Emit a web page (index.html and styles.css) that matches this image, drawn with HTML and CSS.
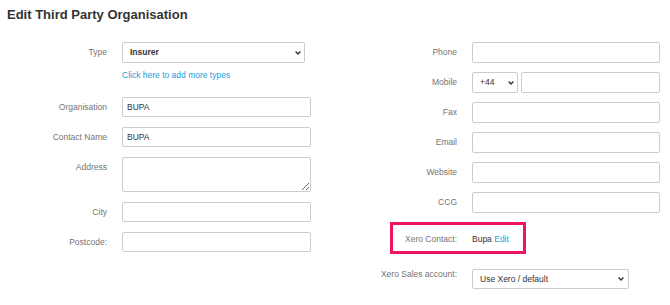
FILE: index.html
```html
<!DOCTYPE html>
<html lang="en">
<head>
<meta charset="utf-8">
<title>Edit Third Party Organisation</title>
<link rel="stylesheet" href="styles.css">
</head>
<body>
<div class="page">
  <h1 class="title">Edit Third Party Organisation</h1>
  <div class="columns">
    <div class="col col-left">
      <div class="row">
        <label class="lbl">Type</label>
        <div class="ctrl">
          <div class="select select-type">
            <span class="select-text bold">Insurer</span>
            <svg class="chev" width="6" height="4" viewBox="0 0 6 4"><path d="M0.6 0.6 L3 3 L5.4 0.6" fill="none" stroke="#333" stroke-width="1.4"/></svg>
          </div>
          <a class="link add-types" href="#">Click here to add more types</a>
        </div>
      </div>
      <div class="row">
        <label class="lbl">Organisation</label>
        <div class="input">BUPA</div>
      </div>
      <div class="row">
        <label class="lbl">Contact Name</label>
        <div class="input">BUPA</div>
      </div>
      <div class="row">
        <label class="lbl">Address</label>
        <textarea class="textarea"></textarea>
      </div>
      <div class="row">
        <label class="lbl">City</label>
        <div class="input"></div>
      </div>
      <div class="row">
        <label class="lbl">Postcode:</label>
        <div class="input"></div>
      </div>
    </div>

    <div class="col col-right">
      <div class="row">
        <label class="lbl">Phone</label>
        <div class="input"></div>
      </div>
      <div class="row">
        <label class="lbl">Mobile</label>
        <div class="mobile">
          <div class="select select-code">
            <span class="select-text">+44</span>
            <svg class="chev" width="6" height="4" viewBox="0 0 6 4"><path d="M0.6 0.6 L3 3 L5.4 0.6" fill="none" stroke="#333" stroke-width="1.4"/></svg>
          </div>
          <div class="input"></div>
        </div>
      </div>
      <div class="row">
        <label class="lbl">Fax</label>
        <div class="input"></div>
      </div>
      <div class="row">
        <label class="lbl">Email</label>
        <div class="input"></div>
      </div>
      <div class="row">
        <label class="lbl">Website</label>
        <div class="input"></div>
      </div>
      <div class="row">
        <label class="lbl">CCG</label>
        <div class="input"></div>
      </div>
      <div class="highlight">
        <span class="hl-label">Xero Contact:</span>
        <span class="hl-value">Bupa <a class="link" href="#">Edit</a></span>
      </div>
      <div class="row row-sales">
        <label class="lbl lbl-top">Xero Sales account:</label>
        <div class="select select-sales">
          <span class="select-text">Use Xero / default</span>
          <svg class="chev" width="6" height="4" viewBox="0 0 6 4"><path d="M0.6 0.6 L3 3 L5.4 0.6" fill="none" stroke="#333" stroke-width="1.4"/></svg>
        </div>
      </div>
    </div>
  </div>
</div>
</body>
</html>
```

FILE: styles.css
```css
* { box-sizing: border-box; }

html, body {
  margin: 0;
  padding: 0;
  background: #ffffff;
}

body {
  font-family: "Liberation Sans", Arial, sans-serif;
  font-size: 8.5px;
  color: #333333;
}

.page {
  width: 670px;
  height: 305px;
  overflow: hidden;
}

.title {
  margin: 0;
  padding: 7px 0 0 7px;
  font-size: 13px;
  line-height: 15px;
  font-weight: bold;
  color: #333333;
}

.columns {
  margin-top: 20px;
  display: grid;
  grid-template-columns: 335px 335px;
}

.col {
  display: flex;
  flex-direction: column;
}

.col-left { gap: 10px; }
.col-right { gap: 9px; }

.row {
  display: grid;
  column-gap: 15px;
  align-items: start;
}

.col-left .row { grid-template-columns: 107px 189px; }
.col-right .row { grid-template-columns: 122px 188px; }

.lbl {
  text-align: right;
  line-height: 20px;
  color: #757575;
  white-space: nowrap;
}

.lbl-top { line-height: 10px; }

.input {
  height: 20px;
  border: 1px solid #cccccc;
  border-radius: 2px;
  background: #fff;
  padding: 0 4px;
  line-height: 18px;
  color: #333;
}

.col-right .input { height: 21px; line-height: 19px; }

.textarea {
  display: block;
  width: 189px;
  height: 35px;
  margin: 0;
  border: 1px solid #cccccc;
  border-radius: 2px;
  resize: vertical;
  font: inherit;
}

.ctrl {
  display: flex;
  flex-direction: column;
}

.select {
  position: relative;
  height: 21px;
  border: 1px solid #cccccc;
  border-radius: 2px;
  background: #fff;
  padding: 0 7px;
  line-height: 19px;
  color: #333;
}

.select .chev {
  position: absolute;
  right: 3px;
  top: 8px;
}

.bold { font-weight: bold; }

.select-type { width: 183px; }

.link {
  color: #1e9de0;
  text-decoration: none;
}

.add-types {
  margin-top: 7px;
  margin-bottom: 6px;
  line-height: 11px;
  height: 11px;
}

.mobile {
  display: flex;
  gap: 3px;
}

.select-code {
  width: 46px;
  flex: none;
}

.mobile .input { flex: 1; }

.highlight {
  margin-left: 55px;
  width: 136px;
  height: 32px;
  border: 3px solid #ef1463;
  display: flex;
  align-items: center;
  gap: 15px;
  padding-top: 1px;
}

.hl-label {
  width: 64px;
  text-align: right;
  color: #757575;
  white-space: nowrap;
}

.hl-value {
  color: #333;
  white-space: nowrap;
}

.row-sales { margin-top: 6px; }

.select-sales {
  width: 157px;
  height: 20px;
  line-height: 18px;
}

.select-sales .chev { top: 7px; right: 4px; }
```
